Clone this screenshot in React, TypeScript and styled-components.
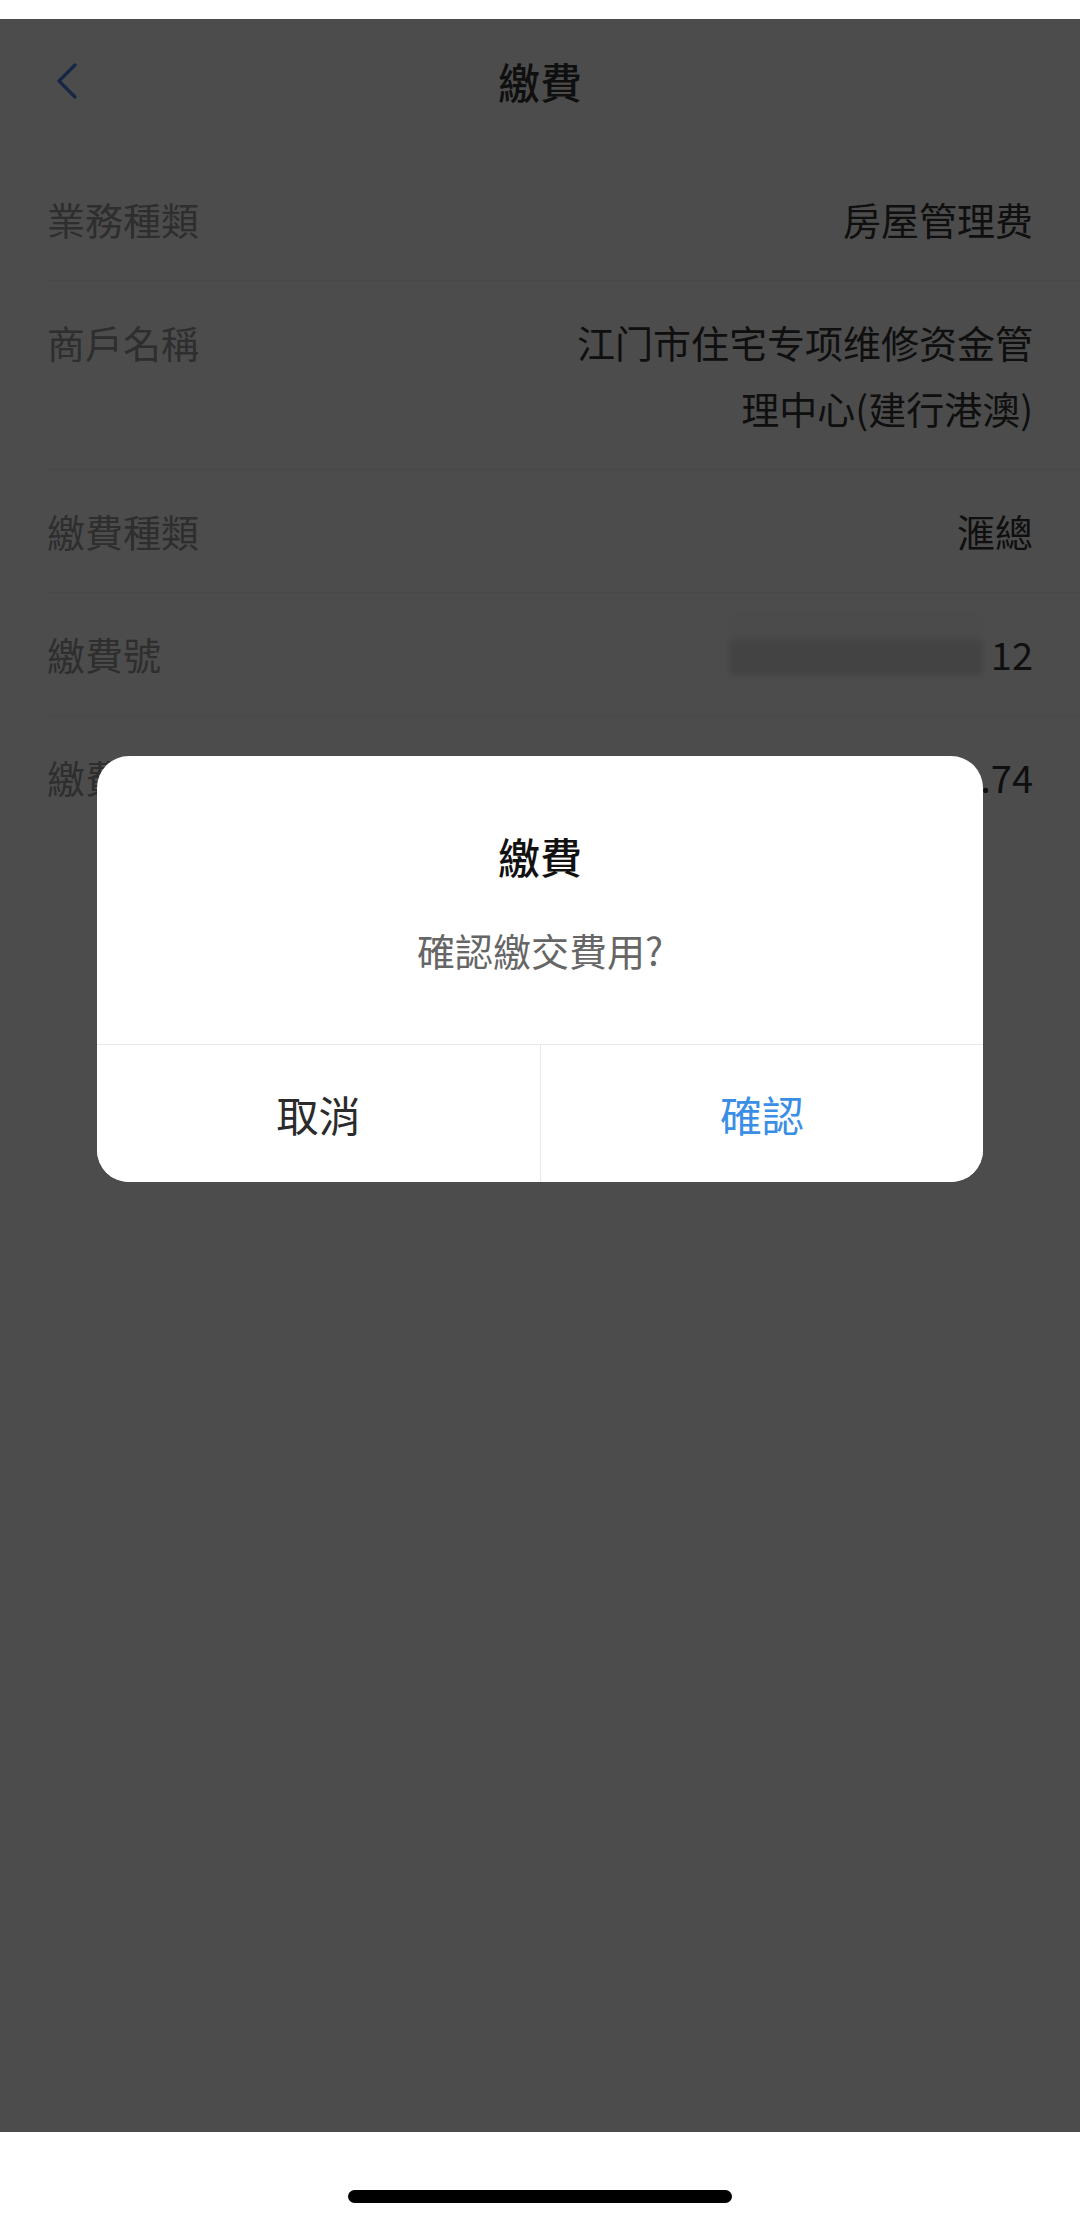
import React from 'react';
import styled, { createGlobalStyle } from 'styled-components';

const GlobalStyle = createGlobalStyle`
  html, body {
    margin: 0;
    padding: 0;
    background: #fff;
  }
  body {
    font-family: "Noto Sans CJK TC", "Noto Sans", sans-serif;
    -webkit-font-smoothing: antialiased;
  }
`;

const Phone = styled.div`
  width: 1080px;
  height: 2226px;
  display: flex;
  flex-direction: column;
  background: #fff;
  overflow: hidden;
`;

const StatusStrip = styled.div`
  height: 19px;
  flex-shrink: 0;
  background: #fff;
`;

const Screen = styled.div`
  position: relative;
  flex: 1;
  background: #fff;
  overflow: hidden;
`;

const NavBar = styled.div`
  height: 124px;
  display: grid;
  grid-template-columns: 1fr auto 1fr;
  align-items: center;
  padding: 0 56px;
`;

const BackButton = styled.button`
  justify-self: start;
  display: flex;
  align-items: center;
  padding: 0;
  border: 0;
  background: none;
  color: #4a80e8;
`;

const NavTitle = styled.h1`
  margin: 0;
  font-size: 42px;
  font-weight: 500;
  color: #333;
  line-height: 60px;
`;

const List = styled.div`
  margin-top: 15px;
`;

const Row = styled.div`
  position: relative;
  display: flex;
  justify-content: space-between;
  align-items: flex-start;
  padding: 28px 47px 29px;
  font-size: 38px;
  line-height: 66px;

  &::after {
    content: '';
    position: absolute;
    left: 47px;
    right: 0;
    bottom: 0;
    height: 1px;
    background: #f0f0f0;
  }

  &:last-child::after {
    display: none;
  }
`;

const Label = styled.span`
  color: #999;
  white-space: nowrap;
`;

const Value = styled.span`
  color: #333;
  max-width: 470px;
  text-align: right;
`;

const MaskedValue = styled(Value)`
  display: flex;
  align-items: flex-start;
`;

const Redacted = styled.span`
  width: 254px;
  height: 64px;
  margin: -10px 8px 0 0;
  background: linear-gradient(#fafafa 0 46%, #e0e0e0 46% 100%);
  filter: blur(3px);
`;

const Overlay = styled.div`
  position: absolute;
  inset: 0;
  background: rgba(0, 0, 0, 0.7);
  display: flex;
  flex-direction: column;
  align-items: center;
  padding-top: 737px;
`;

const Dialog = styled.div`
  width: 886px;
  background: #fff;
  border-radius: 32px;
  overflow: hidden;
`;

const DialogBody = styled.div`
  padding: 70px 40px 66px;
  display: flex;
  flex-direction: column;
  align-items: center;
`;

const DialogTitle = styled.div`
  font-size: 42px;
  font-weight: 500;
  line-height: 60px;
  color: #111;
  margin-bottom: 36px;
`;

const DialogMessage = styled.div`
  font-size: 38px;
  line-height: 56px;
  color: #666;
`;

const DialogActions = styled.div`
  display: grid;
  grid-template-columns: 1fr 1fr;
  border-top: 1px solid #e8e8e8;
`;

const ActionButton = styled.button<{ $primary?: boolean }>`
  height: 137px;
  border: 0;
  background: #fff;
  font-family: inherit;
  font-size: 42px;
  color: ${(p) => (p.$primary ? '#3a8ee6' : '#2b2b2b')};
  & + & {
    border-left: 1px solid #e8e8e8;
  }
`;

const HomeArea = styled.div`
  height: 94px;
  flex-shrink: 0;
  display: flex;
  justify-content: center;
  padding-top: 58px;
  box-sizing: border-box;
  background: #fff;
`;

const HomeIndicator = styled.div`
  width: 384px;
  height: 13px;
  border-radius: 7px;
  background: #000;
`;

const rows = [
  { label: '業務種類', value: '房屋管理费' },
  { label: '商戶名稱', value: '江门市住宅专项维修资金管理中心(建行港澳)' },
  { label: '繳費種類', value: '滙總' },
  { label: '繳費號', value: '12', redacted: true },
  { label: '繳費金額', value: '1.74' },
];

export default function App() {
  return (
    <Phone>
      <GlobalStyle />
      <StatusStrip />
      <Screen>
        <NavBar>
          <BackButton aria-label="返回">
            <svg width="22" height="36" viewBox="0 0 22 36" fill="none">
              <polyline
                points="19,2 3,18 19,34"
                stroke="currentColor"
                strokeWidth="3.2"
                strokeLinecap="round"
                strokeLinejoin="round"
              />
            </svg>
          </BackButton>
          <NavTitle>繳費</NavTitle>
          <span />
        </NavBar>
        <List>
          {rows.map((r) => (
            <Row key={r.label}>
              <Label>{r.label}</Label>
              {r.redacted ? (
                <MaskedValue>
                  <Redacted />
                  {r.value}
                </MaskedValue>
              ) : (
                <Value>{r.value}</Value>
              )}
            </Row>
          ))}
        </List>
        <Overlay>
          <Dialog>
            <DialogBody>
              <DialogTitle>繳費</DialogTitle>
              <DialogMessage>確認繳交費用?</DialogMessage>
            </DialogBody>
            <DialogActions>
              <ActionButton>取消</ActionButton>
              <ActionButton $primary>確認</ActionButton>
            </DialogActions>
          </Dialog>
        </Overlay>
      </Screen>
      <HomeArea>
        <HomeIndicator />
      </HomeArea>
    </Phone>
  );
}
